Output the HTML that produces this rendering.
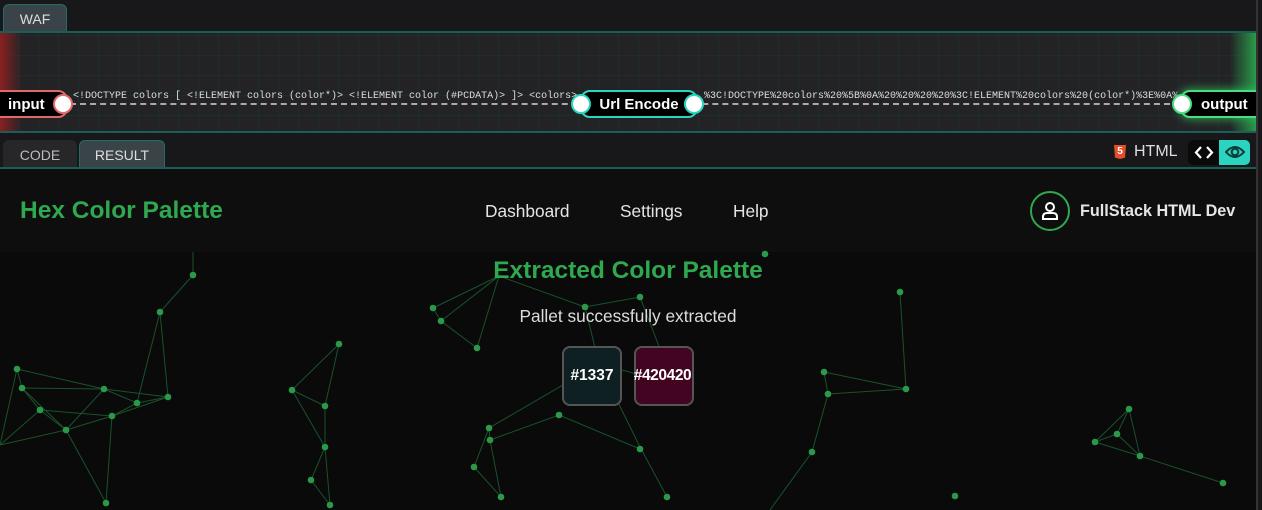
<!DOCTYPE html>
<html><head><meta charset="utf-8"><style>
*{box-sizing:border-box;margin:0;padding:0}
body{width:1262px;height:510px;overflow:hidden;background:#18181b;font-family:"Liberation Sans",sans-serif;position:relative}
.tab{position:absolute;height:28px;border:1px solid #1f6f66;border-bottom:none;border-radius:6px 6px 0 0;background:#3a4448;color:#ddd;font-size:14px;text-align:center;line-height:28px}
.canvas{position:absolute;left:0;top:31px;width:1256px;height:102px;border-top:2px solid #1b5e58;border-bottom:2px solid #1b5e58;background-color:#232325;
background-image:linear-gradient(90deg,rgba(0,90,80,.18) 1px,transparent 1px),linear-gradient(rgba(0,90,80,.18) 1px,transparent 1px);background-size:20px 20px;background-position:-2px 2px;overflow:hidden}
.node{position:absolute;height:28px;background:#000;color:#fff;font-weight:bold;font-size:15px;line-height:25px;border-radius:10px}
.dot{position:absolute;width:20px;height:20px;border-radius:50%;background:#fff}
.mono{position:absolute;font-family:"Liberation Mono",monospace;font-size:10px;color:#ddd;white-space:nowrap}
.dash{position:absolute;height:0;border-top:2px dashed #aaa}
</style></head><body>
<div class="tab" style="left:3px;top:4px;width:64px">WAF</div>
<div style="position:absolute;right:4px;top:0;width:2px;height:510px;background:#333"></div>
<div class="canvas">
 <div style="position:absolute;left:0;top:0;width:22px;height:100%;background:linear-gradient(90deg,#8a2020,transparent)"></div>
 <div style="position:absolute;right:0;top:0;width:26px;height:100%;background:linear-gradient(270deg,#2a9a4a,transparent)"></div>
 <div class="dash" style="left:70px;top:70px;width:1110px"></div>
 <div class="mono" style="left:73px;top:58px">&lt;!DOCTYPE colors [ &lt;!ELEMENT colors (color*)&gt; &lt;!ELEMENT color (#PCDATA)&gt; ]&gt; &lt;colors&gt;</div>
 <div class="mono" style="left:704px;top:58px">%3C!DOCTYPE%20colors%20%5B%0A%20%20%20%20%3C!ELEMENT%20colors%20(color*)%3E%0A%</div>
 <div class="node" style="left:-10px;top:57px;width:78px;border:2px solid #e06a6a;padding-left:16px">input</div>
 <div class="dot" style="left:53px;top:61px;border:2px solid #e06a6a"></div>
 <div class="node" style="left:580px;top:57px;width:118px;border:2px solid #2bd4c0;text-align:center">Url Encode</div>
 <div class="dot" style="left:571px;top:61px;border:2px solid #2bd4c0"></div>
 <div class="dot" style="left:684px;top:61px;border:2px solid #2bd4c0"></div>
 <div class="node" style="left:1180px;top:57px;width:90px;border:2px solid #4ade80;padding-left:19px;box-shadow:0 0 10px #2fbf5f">output</div>
 <div class="dot" style="left:1172px;top:61px;border:2px solid #4ade80"></div>
</div>
<div class="tab" style="left:3px;top:140px;width:74px;background:#27272a;border-color:#27272a;color:#bbb">CODE</div>
<div class="tab" style="left:79px;top:140px;width:86px">RESULT</div>
<div style="position:absolute;left:0;top:167px;width:1256px;height:2px;background:#1b5e58"></div>
<div style="position:absolute;left:1114px;top:145px;width:12px;height:14px;background:#e44d26;color:#fff;font-size:10px;font-weight:bold;text-align:center;line-height:14px;clip-path:polygon(0 0,100% 0,92% 90%,50% 100%,8% 90%)">5</div>
<div style="position:absolute;left:1134px;top:143px;color:#ddd;font-size:16px">HTML</div>
<div style="position:absolute;left:1188px;top:140px;width:62px;height:25px;border-radius:5px;background:#0a0a0a;overflow:hidden">
 <svg style="position:absolute;left:6px;top:5px" width="20" height="15" viewBox="0 0 20 15" fill="none" stroke="#fff" stroke-width="2.2"><path d="M7 2L2 7.5L7 13M13 2L18 7.5L13 13"/></svg>
 <div style="position:absolute;left:31px;top:0;width:31px;height:25px;background:#2bd4c0"></div>
 <svg style="position:absolute;left:37px;top:3px" width="20" height="18" viewBox="0 0 20 18"><path d="M1 9 Q10 -1 19 9 Q10 19 1 9Z" fill="none" stroke="#0a3a35" stroke-width="2"/><circle cx="10" cy="9" r="3.3" fill="none" stroke="#0a3a35" stroke-width="2"/></svg>
</div>
<div style="position:absolute;left:0;top:169px;width:1256px;height:341px;background:#0a0a0a"></div>
<div style="position:absolute;left:0;top:169px;width:1256px;height:83px;background:#0e0e0e"></div>
<svg style="position:absolute;left:0;top:169px" width="1256" height="341" viewBox="0 169 1256 341">
<g stroke="#1d6b35" stroke-width="1" opacity=".75" fill="none">
<path d="M193 252V275L160 312L168 397M160 312L137 403M17 369L22 388L40 410L66 430L104 389L137 403L168 397L104 389L17 369M40 410L112 416L168 397M66 430L112 416L137 403M22 388L104 389M0 445L40 410M0 445L66 430M17 369L0 445M66 430L106 503M112 416L106 503M22 388L66 430"/>
<path d="M292 390L325 406L339 344L292 390M292 390L325 447L311 480L330 505L325 447L325 406"/>
<path d="M433 308L441 321L477 348L499 276L433 308M441 321L499 276L585 307L640 297L660 349M585 307L599 364L640 447L667 497M599 364L489 428L474 467L501 497L490 440L559 415L640 449M489 428L490 440M599 364L660 380"/>
<path d="M824 372L828 394L906 389L824 372M828 394L812 452L770 510M900 292L906 389"/>
<path d="M1095 442L1117 434L1129 409L1140 456L1223 483M1095 442L1129 409M1095 442L1140 456L1117 434"/>
</g>
<g fill="#2a9a4a">
<circle cx="193" cy="275" r="3.3"/><circle cx="160" cy="312" r="3.3"/><circle cx="17" cy="369" r="3.3"/><circle cx="22" cy="388" r="3.3"/><circle cx="40" cy="410" r="3.3"/><circle cx="66" cy="430" r="3.3"/><circle cx="104" cy="389" r="3.3"/><circle cx="112" cy="416" r="3.3"/><circle cx="137" cy="403" r="3.3"/><circle cx="168" cy="397" r="3.3"/><circle cx="106" cy="503" r="3.3"/>
<circle cx="292" cy="390" r="3.3"/><circle cx="325" cy="406" r="3.3"/><circle cx="339" cy="344" r="3.3"/><circle cx="325" cy="447" r="3.3"/><circle cx="311" cy="480" r="3.3"/><circle cx="330" cy="505" r="3.3"/>
<circle cx="433" cy="308" r="3.3"/><circle cx="441" cy="321" r="3.3"/><circle cx="477" cy="348" r="3.3"/><circle cx="585" cy="307" r="3.3"/><circle cx="640" cy="297" r="3.3"/><circle cx="599" cy="364" r="3.3"/><circle cx="559" cy="415" r="3.3"/><circle cx="489" cy="428" r="3.3"/><circle cx="490" cy="440" r="3.3"/><circle cx="474" cy="467" r="3.3"/><circle cx="501" cy="497" r="3.3"/><circle cx="640" cy="449" r="3.3"/><circle cx="667" cy="497" r="3.3"/>
<circle cx="765" cy="254" r="3.3"/><circle cx="824" cy="372" r="3.3"/><circle cx="828" cy="394" r="3.3"/><circle cx="906" cy="389" r="3.3"/><circle cx="900" cy="292" r="3.3"/><circle cx="812" cy="452" r="3.3"/><circle cx="955" cy="496" r="3.3"/>
<circle cx="1095" cy="442" r="3.3"/><circle cx="1117" cy="434" r="3.3"/><circle cx="1129" cy="409" r="3.3"/><circle cx="1140" cy="456" r="3.3"/><circle cx="1223" cy="483" r="3.3"/>
</g></svg>
<div style="position:absolute;left:20px;top:197px;color:#2fa84f;font-weight:bold;font-size:24.5px">Hex Color Palette</div>
<div style="position:absolute;left:485px;top:201px;color:#e5e5e5;font-size:17.3px">Dashboard</div>
<div style="position:absolute;left:620px;top:201px;color:#e5e5e5;font-size:17.3px">Settings</div>
<div style="position:absolute;left:733px;top:201px;color:#e5e5e5;font-size:17.3px">Help</div>
<div style="position:absolute;left:1030px;top:191px;width:40px;height:40px;border:2px solid #2fa84f;border-radius:50%">
<svg style="position:absolute;left:9px;top:8px" width="18" height="20" viewBox="0 0 18 20" fill="none" stroke="#fff" stroke-width="2"><circle cx="9" cy="6" r="4"/><path d="M2 18V16Q2 12 6 12H12Q16 12 16 16V18Z"/></svg></div>
<div style="position:absolute;left:1080px;top:202px;color:#e5e5e5;font-size:16.2px;font-weight:bold">FullStack HTML Dev</div>
<div style="position:absolute;left:0;top:257px;width:1256px;text-align:center;color:#2fa84f;font-weight:bold;font-size:24.5px">Extracted Color Palette</div>
<div style="position:absolute;left:0;top:306px;width:1256px;text-align:center;color:#ddd;font-size:17.3px">Pallet successfully extracted</div>
<div style="position:absolute;left:562px;top:346px;width:60px;height:60px;border:2px solid #555;border-radius:8px;background:#0f2022;color:#fff;font-weight:bold;font-size:15.5px;text-align:center;line-height:56px">#1337</div>
<div style="position:absolute;left:634px;top:346px;width:60px;height:60px;border:2px solid #555;border-radius:8px;background:#420420;color:#fff;font-weight:bold;font-size:15.5px;text-align:center;line-height:56px;white-space:nowrap;letter-spacing:-.4px;text-indent:-3px">#420420</div>
</body></html>
